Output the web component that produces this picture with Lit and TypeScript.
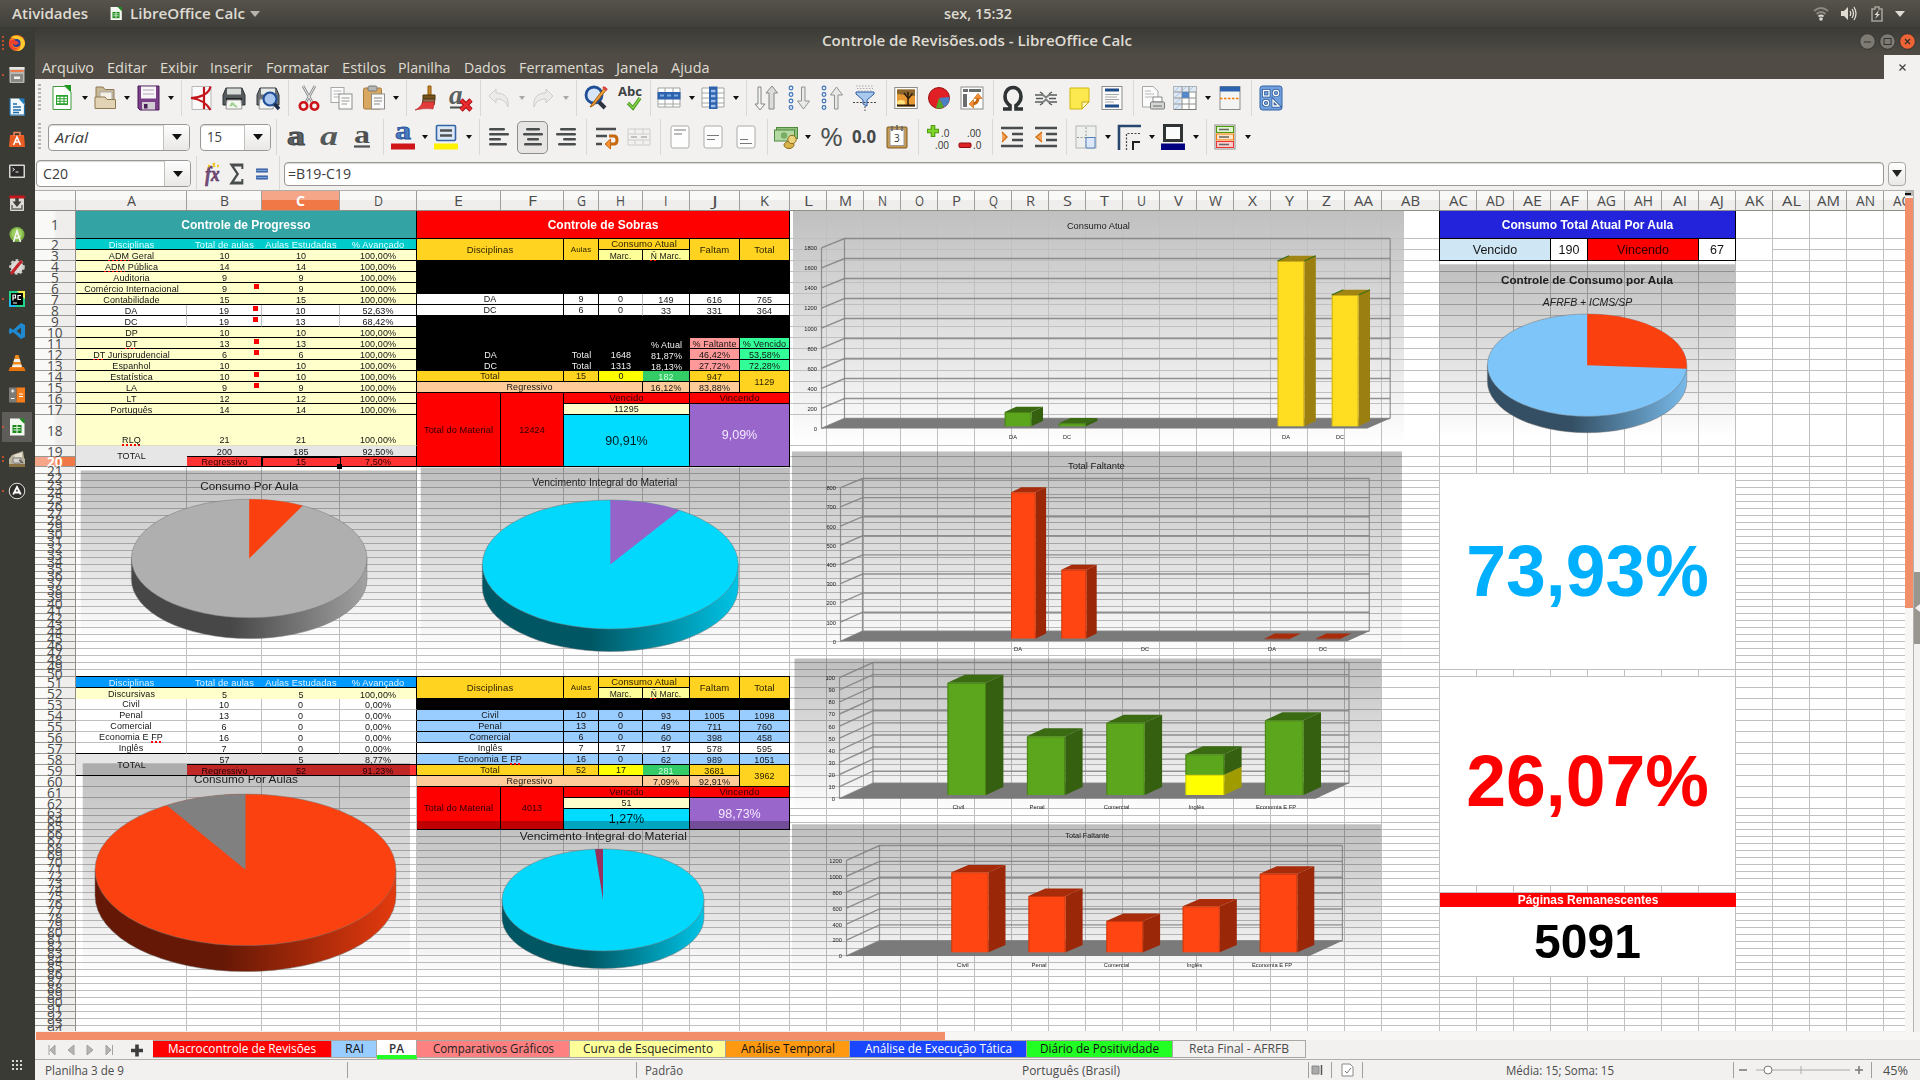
import { LitElement, html, svg, css, nothing } from "lit";
import { customElement } from "lit/decorators.js";

const UI = "'Open Sans','Noto Sans',sans-serif";
const range = (n: number) => Array.from({ length: n }, (_, i) => i);

/* ---------- sheet geometry ---------- */
const COLS = ["A","B","C","D","E","F","G","H","I","J","K","L","M","N","O","P","Q","R","S","T","U","V","W","X","Y","Z","AA","AB","AC","AD","AE","AF","AG","AH","AI","AJ","AK","AL","AM","AN","AO"];
const COL_W = COLS.map((c, i) => (i < 11 ? [111, 75, 78, 77, 84, 63, 35, 44, 47, 50, 50][i] : c === "AB" ? 58 : 37));
const rowH = (r: number) =>
  r === 1 ? 28 : r <= 17 ? 11 : r === 18 ? 31 : r === 19 ? 11 : r === 20 ? 10 : r <= 50 ? 7 : r <= 62 ? 11 : 7;
const ROW_H = range(94).map((i) => rowH(i + 1));
const GRID_W = 1829;
const GRID_H = 820;
const colTpl = COL_W.map((w) => w + "px").join(" ");
const rowTpl = ROW_H.map((h) => h + "px").join(" ");
const gridPath = (() => {
  let d = "", x = 0, y = 0;
  for (const w of COL_W) { x += w; d += `M${x - 0.5} 0V${GRID_H}`; }
  for (const h of ROW_H) { y += h; d += `M0 ${y - 0.5}H${GRID_W}`; }
  return d;
})();

/* Text drawn to an exact advance width */
const fit = (t: string, w: number, size = 14, color = "#4c4c4c", weight = 400, extra = "") => html`
  <svg class="fit" width=${w} height=${Math.round(size * 1.5)}>
    <text x="0" y=${size * 1.1} textLength=${w} lengthAdjust="spacingAndGlyphs" font-size=${size}
      font-weight=${weight} font-style=${extra || "normal"} fill=${color} font-family=${UI}>${t}</text></svg>`;

type Item = { x: number; w: number; c?: string; t?: unknown };
const row = (items: Item[], origin: number) => {
  let cur = origin;
  return items.map((i) => {
    const m = i.x - cur;
    cur = i.x + i.w;
    return html`<div class="it ${i.c ?? ""}" style="margin-left:${m}px;width:${i.w}px">${i.t ?? nothing}</div>`;
  });
};

/* ---------- icons ---------- */
const ic = (body: unknown, w = 24) => html`<svg class="fit" width=${w} height="26" viewBox="0 0 24 26" fill="none" preserveAspectRatio="none">${body}</svg>`;
const lines = (rows: number[][]) => rows.map(([x, y, w]) => svg`<rect x=${x} y=${y} width=${w} height="2.6" rx="1.3" fill="#4a4d4e"/>`);
const dropIcon = html`<svg width="6" height="4"><path d="M0 0H6L3 4Z" fill="#111"/></svg>`;
const dropDim = html`<svg width="6" height="4"><path d="M0 0H6L3 4Z" fill="#a9a8a6"/></svg>`;
const I: Record<string, unknown> = {
  new: ic(svg`<path d="M3 1.5H15L21 7V24.500H3Z" fill="#fff" stroke="#3c9a3c"/><path d="M14 0H21V7Z" fill="#1d9a1d"/><rect x="6" y="10" width="12" height="10" fill="#2aa02a"/><path d="M7 12.500H17M7 15H17M7 17.500H17" stroke="#fff" stroke-width="1.400"/><path d="M10 10V20M14 10V20" stroke="#2aa02a"/>`),
  open: ic(svg`<path d="M3 2H10L12 4.500H21V22H3Z" fill="#c9b896" stroke="#8d7a58"/><path d="M7 7H19V16H7Z" fill="#f4f0e6" stroke="#aaa"/><path d="M2 23.500V12H12L14 14.500H22.500V23.500Z" fill="#e2d3b4" stroke="#8d7952"/>`),
  save: ic(svg`<path d="M2 1H23V25H4L2 23Z" fill="#7a3f86" stroke="#4b1d58"/><rect x="5" y="1.500" width="15" height="12" fill="#f7f5f7"/><path d="M7 5H18M7 9H18" stroke="#c9c2cb" stroke-width="1.400"/><rect x="6" y="17" width="13" height="7.500" fill="#cfcbd0"/><rect x="8" y="19" width="3.500" height="4.500" fill="#4b1d58"/>`),
  pdf: ic(svg`<path d="M3 1.500H22V24.500H3Z" fill="#fafafa" stroke="#b8b8b8"/><path d="M21.500 1.500C20 9 11 13 2 13C10 14 17 17 21.500 25M15 2V24" stroke="#c3161c" stroke-width="2.200"/>`),
  print: ic(svg`<path d="M4 3H20L23 10V20H1V10Z" fill="#55595b" stroke="#2e3436"/><rect x="5" y="3.500" width="14" height="6" fill="#d9dbd8"/><path d="M4 13H20V16H4Z" fill="#222"/><path d="M5 15H19L20 24H4Z" fill="#f6f8f4" stroke="#999"/><path d="M9 18L15 22M8 21L12 18" stroke="#9fcf8b" stroke-width="2"/>`),
  preview: ic(svg`<path d="M4 3H20L23 10V20H1V10Z" fill="#6c7072" stroke="#2e3436"/><rect x="5" y="3.500" width="14" height="6" fill="#e8eae7"/><path d="M4 14H18L17 24H3Z" fill="#f1f4f0" stroke="#999"/><circle cx="14" cy="14" r="6.500" fill="#a9c6ee" stroke="#1f4f97" stroke-width="2.200"/><path d="M18.500 19L23 24" stroke="#1b2c48" stroke-width="3.400"/>`),
  cut: ic(svg`<path d="M6 1L15 17M18 1L9 17" stroke="#8b8f8e" stroke-width="2.600"/><path d="M6 1L15 17M18 1L9 17" stroke="#e4e6e4" stroke-width="1"/><circle cx="6.500" cy="21" r="3.700" stroke="#cc1216" stroke-width="2.600"/><circle cx="17.500" cy="21" r="3.700" stroke="#cc1216" stroke-width="2.600"/>`),
  copy: ic(svg`<rect x="2" y="2.500" width="13" height="15" fill="#fbfbfb" stroke="#a6a8a5"/><path d="M4.500 6H12.500M4.500 9H12.500M4.500 12H12.500" stroke="#b4b6b3"/><rect x="10" y="9" width="13" height="15" fill="#fbfbfb" stroke="#8c8f8b"/><path d="M12.500 13H20.500M12.500 16H20.500M12.500 19H18" stroke="#9a9d99"/>`),
  paste: ic(svg`<rect x="1.500" y="3" width="18" height="21" rx="1.500" fill="#d9a860" stroke="#a67a38"/><rect x="6" y="1" width="9" height="5" rx="1.500" fill="#b3b6b4" stroke="#777"/><rect x="9.500" y="9" width="13" height="15" fill="#fafafa" stroke="#8c8f8b"/><path d="M12 13H20M12 16H20M12 19H18" stroke="#888b87"/>`),
  brush: ic(svg`<path d="M14 1H17V11H14Z" fill="#c6862f" stroke="#8f5902"/><path d="M9 10H21V14H9Z" fill="#77511a" stroke="#4f3408"/><path d="M9 14H21L20 20H8Z" fill="#8f6a4a" stroke="#5a3c1e"/><path d="M9 17H20.500L19 24C12 23 6 24 1 25C5 23 7 21 9 17Z" fill="#e23b3b" stroke="#b31c20" stroke-width=".6"/>`),
  clear: ic(svg`<text x="1" y="19" font-size="27" font-style="italic" font-weight="700" fill="#5b6060" font-family="Liberation Serif">a</text><path d="M2 22.500H13" stroke="#4a4d4e" stroke-width="2"/><path d="M13 15L23 25M23 15L13 25" stroke="#a00c10" stroke-width="4.600"/><path d="M13 15L23 25M23 15L13 25" stroke="#ee2d30" stroke-width="2.800"/>`),
  undo: ic(svg`<path d="M2 11L9 4V8C18 8 22 13 21 22C19 16 15 14 9 14V18Z" fill="#ecebe9" stroke="#cfcdca"/>`),
  redo: ic(svg`<path d="M22 11L15 4V8C6 8 2 13 3 22C5 16 9 14 15 14V18Z" fill="#ecebe9" stroke="#cfcdca"/>`),
  find: ic(svg`<circle cx="10" cy="10" r="8" fill="#d7e4f6" stroke="#204f98" stroke-width="2.800"/><path d="M15 17L21 23" stroke="#2d3440" stroke-width="4"/><path d="M21 2L8 19L6 22L9.500 20.500L23 4Z" fill="#f2a33c" stroke="#a45a0c"/><path d="M19 2L23 5" stroke="#d44" stroke-width="2.600"/>`),
  abc: ic(svg`<text x="0" y="11" font-size="12" font-weight="700" textLength="24" lengthAdjust="spacingAndGlyphs" fill="#3c4142" font-family="Open Sans">Abc</text><path d="M10 18L15 23L22 13" stroke="#4a9a1e" stroke-width="3.400"/><path d="M10 18L15 23L22 13" stroke="#88d451" stroke-width="1.400"/>`),
  rows: ic(svg`<path d="M1 3H23V22H1Z" fill="#fff" stroke="#a2a5a1"/><path d="M8 3V22M16 3V22M1 19H23" stroke="#a2a5a1"/><rect x=".5" y="7" width="23" height="7.500" fill="#2d62ae"/><path d="M3 10.500H7M10 10.500H14M17 10.500H21" stroke="#7fa9e0" stroke-width="2"/>`),
  cols: ic(svg`<path d="M1 3H23V22H1Z" fill="#fff" stroke="#a2a5a1"/><path d="M1 8H23M1 13H23M1 18H23" stroke="#a2a5a1"/><rect x="8" y="1.500" width="8.500" height="22.500" fill="#2d62ae"/><path d="M10 6H14.500M10 11H14.500M10 16H14.500M10 21H14.500" stroke="#9fc0ec" stroke-width="2.400"/>`),
  sort: ic(svg`<path d="M7 2V19H11L6 25L1 19H4V2Z" fill="#f5f5f4" stroke="#848784"/><path d="M15 24V8H12L18 1L23.500 8H20V24Z" fill="#dcdddb" stroke="#848784"/>`),
  sortd: ic(svg`<g stroke="#3a6fb5" stroke-width="1.100" fill="#e6eefa"><circle cx="4" cy="3" r="1.900"/><circle cx="4" cy="9.500" r="1.900"/><circle cx="4" cy="16" r="1.900"/><circle cx="4" cy="22.500" r="1.900"/></g><path d="M14.500 2V16H10.500L16.500 24L22.500 16H18V2Z" fill="#e9eae8" stroke="#8f928f"/>`),
  sorta: ic(svg`<g stroke="#3a6fb5" stroke-width="1.100" fill="#e6eefa"><circle cx="4" cy="3" r="1.900"/><circle cx="4" cy="9.500" r="1.900"/><circle cx="4" cy="16" r="1.900"/><circle cx="4" cy="22.500" r="1.900"/></g><path d="M14.500 24V10H10.500L16.500 2L22.500 10H18V24Z" fill="#e9eae8" stroke="#8f928f"/>`),
  filter: ic(svg`<path d="M3 1H21M4 3.500H20M5 6H19" stroke="#aaa" stroke-dasharray="1.500 1.500"/><path d="M3 7H21V9L14 15V21L10 19V15L3 9Z" fill="#a9c8ee" stroke="#2c5da5"/><path d="M0 17.500H24M12 21V26" stroke="#444" stroke-dasharray="2 1.500"/>`),
  image: ic(svg`<rect x=".8" y="2.500" width="22.400" height="21" fill="#fff" stroke="#8b8e8a"/><rect x="3" y="4.500" width="18" height="17" fill="#e79a33"/><path d="M3 4.500H21V11L3 9Z" fill="#8a652e"/><ellipse cx="7" cy="18" rx="4" ry="3" fill="#ffe37a"/><path d="M14 20.500V13L10 8M14 14L18.500 8.500M14 12V7" stroke="#2c1c0a" stroke-width="1.500"/><path d="M3 20.500H21" stroke="#2c1c0a" stroke-width="2"/>`),
  chart: ic(svg`<circle cx="12" cy="13" r="10.500" fill="#e02024" stroke="#9c1115"/><path d="M12 13L22.400 12A10.500 10.500 0 0 1 17 22.300Z" fill="#4a7fc4"/><path d="M12 13L17 22.300A10.500 10.500 0 0 1 9 23Z" fill="#57a52b"/>`),
  pivot: ic(svg`<rect x="1" y="2" width="22" height="22" fill="#fff" stroke="#8b8e8a"/><path d="M3 4H8V7H3ZM9 4H21V7H9ZM3 9H7V22H3Z" fill="#6a6e6f"/><path d="M11 19C16 19 18 17 18 13" stroke="#c8680d" stroke-width="3"/><path d="M9 19L13.500 14.500V23ZM18 8.500L22 13.500H14Z" fill="#f5923b" stroke="#c8680d" stroke-width=".7"/>`),
  omega: ic(svg`<path d="M2 24H9V20.500C5.500 18 4 15 4 11.500C4 6 7.500 2.500 12 2.500C16.500 2.500 20 6 20 11.500C20 15 18.500 18 15 20.500V24H22" stroke="#2f3334" stroke-width="3.600"/>`),
  link: ic(svg`<path d="M1 10H9L12 12.500L15 10H23M1 17H9L12 14.500L15 17H23" stroke="#7d817f" stroke-width="2"/><path d="M2 13.500H9M15 13.500H22" stroke="#555957" stroke-width="1.600"/><path d="M6 7L9 9M18 7L15 9M6 20L9 18M18 20L15 18" stroke="#555957" stroke-width="1.400"/>`),
  note: ic(svg`<path d="M3 3H22V17L15 24H3Z" fill="#fbe94f" stroke="#d2b70e"/><path d="M15 24V17H22Z" fill="#fff9c0" stroke="#c8a60a"/>`),
  head: ic(svg`<rect x="2" y="1.500" width="20" height="23" fill="#fbfbfb" stroke="#8b8e8a"/><path d="M5 5H19M5 21H19" stroke="#1f4b87" stroke-width="3"/><path d="M5 9.500H19M5 12H17M5 14.500H19M5 17H14" stroke="#a7a9a6"/>`),
  area: ic(svg`<path d="M1.500 1.500H12L17 6V22H1.500Z" fill="#fbfbfb" stroke="#a6a8a5"/><path d="M4 6H10M4 9H13M4 12H13" stroke="#b7b9b6"/><path d="M12 12H21V17H12Z" fill="#fff" stroke="#888"/><rect x="9.500" y="17" width="14" height="7" rx="1" fill="#d5d7d4" stroke="#7b7e7a"/><path d="M12 21H21" stroke="#666"/>`),
  freeze: ic(svg`<rect x="1" y="1.500" width="22" height="23" fill="#fff" stroke="#777a76"/><path d="M1 1.500H23V7H9V24H1Z" fill="#dfe9f6"/><path d="M1 7H23M1 13H23M1 19H23M9 1.500V24.500M16 1.500V24.500" stroke="#8d908c"/><path d="M2 6L6 2M9 6L13 2M16 6L20 2M2 12L7 8M2 18L7 14M2 24L7 20" stroke="#9dbbe0" stroke-width=".8"/><rect x="9" y="7" width="7" height="6" fill="#5588c8"/>`),
  split: ic(svg`<rect x="2" y="1.500" width="20" height="23" fill="#f4f4f2" stroke="#8b8e8a"/><rect x="2" y="1.500" width="20" height="5" fill="#2d62ae"/><path d="M2 13.500H22" stroke="#f57900" stroke-width="1.500" stroke-dasharray="2.500 1.500"/>`),
  draw: ic(svg`<rect x="1" y="1" width="22" height="24" rx="2.500" fill="#6f9fdc" stroke="#3465a4"/><g stroke="#2a5797" stroke-width="2.800"><rect x="4.500" y="5.500" width="5.500" height="5.500"/><circle cx="17" cy="8" r="2.700"/><circle cx="7" cy="18" r="2.700"/><path d="M14 21V15L20 21Z"/></g><g stroke="#fff" stroke-width="1.300"><rect x="4.500" y="5.500" width="5.500" height="5.500"/><circle cx="17" cy="8" r="2.700"/><circle cx="7" cy="18" r="2.700"/><path d="M14 21V15L20 21Z"/></g>`),
  bold: ic(svg`<text x="3" y="21" font-size="27" font-weight="700" textLength="18" lengthAdjust="spacingAndGlyphs" fill="#5d6162" stroke="#43474a" stroke-width="1" font-family="Liberation Serif">a</text>`),
  ital: ic(svg`<text x="3" y="21" font-size="28" font-weight="700" font-style="italic" textLength="18" lengthAdjust="spacingAndGlyphs" fill="#55595a" font-family="Liberation Serif">a</text>`),
  under: ic(svg`<text x="4" y="19" font-size="25" font-weight="700" textLength="16" lengthAdjust="spacingAndGlyphs" fill="#4d5152" font-family="Liberation Serif">a</text><path d="M4 22.500H20" stroke="#4d5152" stroke-width="2.200"/>`),
  fcol: ic(svg`<text x="4" y="15" font-size="25" font-weight="700" textLength="16" lengthAdjust="spacingAndGlyphs" fill="#4b7cc0" stroke="#27539a" stroke-width=".8" font-family="Liberation Serif">a</text><rect x="0" y="19.500" width="24" height="6" fill="#cf1418"/>`),
  hl: ic(svg`<rect x="2.500" y="1.500" width="19" height="15" rx="1" fill="#dbe7f7" stroke="#3465a4" stroke-width="1.600"/><path d="M6 6.500H18M6 11.500H18" stroke="#4d5152" stroke-width="2.400"/><rect x="0" y="19.500" width="24" height="6" fill="#fff200"/>`),
  al: ic(lines([[2, 4, 16], [2, 9, 20], [2, 14, 12], [2, 19, 18]])),
  ac: ic(lines([[5, 4, 14], [2, 9, 20], [6, 14, 12], [3, 19, 18]])),
  ar: ic(lines([[6, 4, 16], [2, 9, 20], [9, 14, 13], [4, 19, 18]])),
  wrap: ic(svg`<path d="M1 5H21M1 12H12M1 20H7" stroke="#4a4d4e" stroke-width="2.400"/><path d="M14 12H19C23 12 23 20 19 20H14" stroke="#c8680d" stroke-width="3"/><path d="M10 20L15.500 15V25Z" fill="#f5923b" stroke="#c8680d"/>`),
  merge: ic(svg`<path d="M1 5H23V21H1ZM1 10H23M1 16H23M8 5V10M16 5V10M8 16V21M16 16V21" stroke="#cfcdca"/><path d="M4 13H10M14 13H20" stroke="#c2c0bd" stroke-width="2"/>`),
  vt: ic(svg`<rect x="3" y="2" width="18" height="22" rx="2" fill="#fdfdfd" stroke="#aaaca9"/><path d="M6 6H18M6 10H14" stroke="#777a77" stroke-width="1.200"/>`),
  vm: ic(svg`<rect x="3" y="2" width="18" height="22" rx="2" fill="#fdfdfd" stroke="#aaaca9"/><path d="M6 11.500H18M6 15.500H14" stroke="#777a77" stroke-width="1.200"/>`),
  vb: ic(svg`<rect x="3" y="2" width="18" height="22" rx="2" fill="#fdfdfd" stroke="#aaaca9"/><path d="M6 15.500H14M6 19.500H18" stroke="#777a77" stroke-width="1.200"/>`),
  money: ic(svg`<rect x="2.500" y="3.500" width="21" height="11" fill="#8fbf7b" stroke="#4e8a3c"/><rect x=".5" y="6" width="20" height="11" fill="#b5d9a3" stroke="#4e8a3c"/><circle cx="10" cy="11.500" r="3.200" fill="#79ad66"/><ellipse cx="15" cy="21" rx="5" ry="3.500" fill="#d9b34c" stroke="#8a6914"/><circle cx="18" cy="15.500" r="4.200" fill="#ecd27c" stroke="#8a6914"/>`),
  pct: ic(svg`<text x="0" y="22" font-size="26" textLength="23" lengthAdjust="spacingAndGlyphs" fill="#4d5152" font-family="Open Sans">%</text>`),
  num: ic(svg`<text x="0" y="19" font-size="17" font-weight="700" textLength="24" lengthAdjust="spacingAndGlyphs" fill="#454849" font-family="Open Sans">0.0</text>`),
  date: ic(svg`<rect x="2" y="3" width="20" height="21" rx="1" fill="#c99a52" stroke="#7b5a22"/><rect x="5" y="5.500" width="14" height="16" fill="#fff" stroke="#999"/><path d="M7 2V7M12 1V6M17 2V7" stroke="#666" stroke-width="1.600"/><text x="9" y="18" font-size="10" fill="#333" font-family="Open Sans">3</text>`),
  adddec: ic(svg`<path d="M1 7H13M7 1V13" stroke="#4f9a10" stroke-width="4.600"/><path d="M2 7H12M7 2V12" stroke="#7fd628" stroke-width="2.400"/><text x="15" y="13" font-size="10" fill="#333" font-family="Open Sans">.0</text><text x="9" y="25" font-size="10" fill="#333" font-family="Open Sans">.00</text>`),
  remdec: ic(svg`<text x="9" y="13" font-size="10" fill="#333" font-family="Open Sans">.00</text><text x="15" y="25" font-size="10" fill="#333" font-family="Open Sans">.0</text><rect x="1" y="19" width="12" height="4.500" rx="1" fill="#dd2226" stroke="#930c10"/>`),
  ind: ic(svg`<path d="M1 4H23M12 10H23M12 16H23M1 22H23" stroke="#4a4d4e" stroke-width="2.600"/><path d="M2 8L7 13L2 18" fill="#f5a15b" stroke="#d0700f" stroke-width="1.400"/>`),
  outd: ic(svg`<path d="M1 4H23M12 10H23M12 16H23M1 22H23" stroke="#4a4d4e" stroke-width="2.600"/><path d="M8 8L2 13L8 18" fill="#f5a15b" stroke="#d0700f" stroke-width="1.400"/>`),
  bord: ic(svg`<rect x="2" y="2" width="20" height="22" fill="#eef0ed" stroke="#b4b6b3"/><path d="M12 3V24M3 13.500H22" stroke="#999" stroke-dasharray="2 1.500"/><path d="M12 13.500H21V24H12Z" fill="#dce8f8" stroke="#5580bb"/>`),
  bsty: ic(svg`<path d="M2 26V2H24" stroke="#27476e" stroke-width="2.600"/><path d="M9.500 26V9.500H24" stroke="#444" stroke-width="1.200" stroke-dasharray="2 1.500"/><path d="M16 26V18H23" stroke="#222" stroke-width="2"/>`),
  bcol: ic(svg`<rect x="3.500" y="1.500" width="17" height="15" fill="#fbfbfb" stroke="#2f3334" stroke-width="3"/><rect x="0" y="19.500" width="24" height="6.500" fill="#000080"/>`),
  cond: ic(svg`<rect x="2" y="1" width="20" height="24" fill="#fbfbfb" stroke="#8b8e8a"/><rect x="3.500" y="2.500" width="17" height="6" fill="#dff5d2" stroke="#4e9a06"/><rect x="3.500" y="10" width="17" height="6" fill="#fce5c8" stroke="#f57900"/><rect x="3.500" y="17.500" width="17" height="6" fill="#fbcaca" stroke="#e33"/><path d="M6 5.500H16M6 13H16M6 20.500H16" stroke="#666" stroke-width="1.500"/>`),
  fx: ic(svg`<text x="3" y="20" font-size="20" font-style="italic" font-weight="700" textLength="19" lengthAdjust="spacingAndGlyphs" fill="#75507b" stroke="#5c3566" stroke-width=".7" font-family="Liberation Serif">fx</text><path d="M7 4L9 6M9 4L7 6M13 2L16 6M16 2L13 6M19 4L21 6M21 4L19 6" stroke="#f0c419" stroke-width="1.600"/>`, 18),
  sum: ic(svg`<path d="M20 8V4H4L13 13L4 22H20V18" stroke="#4a4d4e" stroke-width="3"/>`, 16),
  eq: ic(svg`<path d="M2 9.500H22M2 16.500H22" stroke="#27539a" stroke-width="4"/><path d="M3 9.500H21M3 16.500H21" stroke="#7ba3da" stroke-width="1.400"/>`, 14),
};

const it = (k: string, cx: number, w = 22): Item => ({ x: cx - w / 2, w, t: I[k] });
const dd = (cx: number, dim = false): Item => ({ x: cx - 3, w: 6, t: dim ? dropDim : dropIcon });
const sp = (cx: number): Item => ({ x: cx, w: 1, c: "sep" });
const bar1: Item[] = [
  { x: 38, w: 3, c: "grip" }, it("new", 62), dd(84.5), it("open", 105), dd(126.5), it("save", 148), dd(170.5), sp(181), it("pdf", 201, 21), it("print", 234), it("preview", 267.5), sp(288),
  it("cut", 308.5, 20), it("copy", 341), it("paste", 373.5), dd(395.5), sp(406), it("brush", 426), it("clear", 460), sp(480), it("undo", 499, 23), dd(521.5, true), it("redo", 543, 23), dd(565.5, true), sp(576),
  it("find", 595.5, 23), it("abc", 629.5, 23), sp(650), it("rows", 669), dd(691.5), it("cols", 713), dd(735.5), sp(746), it("sort", 766), it("sortd", 799), it("sorta", 832), it("filter", 864.5), sp(886),
  it("image", 906, 24), it("chart", 939), it("pivot", 972), sp(993), it("omega", 1013), it("link", 1046), it("note", 1079), it("head", 1112), sp(1133), it("area", 1153, 24), it("freeze", 1185), dd(1207.5), it("split", 1230), sp(1251), it("draw", 1271, 23),
];
const combo = (x: number, w: number, split: number, t: unknown): Item => ({ x, w, c: "combo", t: html`<div class="cv" style="width:${split}px">${t}</div><div class="cb"><svg width="10" height="6"><path d="M0 0H10L5 6Z" fill="#111"/></svg></div>` });
const bar2: Item[] = [
  { x: 38, w: 3, c: "grip" }, combo(48, 142, 115, fit("Arial", 33, 15, "#3c3c3c", 400, "italic")), combo(200, 71, 44, fit("15", 15, 14.5, "#3c3c3c")), sp(276),
  it("bold", 296), it("ital", 329), it("under", 362), sp(383), it("fcol", 402.500, 24), dd(424.500), it("hl", 446, 24), dd(468.500), sp(479), it("al", 499), { ...it("ac", 532.500, 31), c: "pressed" }, it("ar", 565.500), sp(586),
  it("wrap", 606.500), it("merge", 639), sp(660), it("vt", 680), it("vm", 713), it("vb", 746), sp(767), it("money", 785.500, 23), dd(808), it("pct", 831.500), it("num", 863.500, 24), it("date", 897), sp(918),
  it("adddec", 938, 25), it("remdec", 970, 25), sp(992), it("ind", 1012, 24), it("outd", 1046, 24), sp(1066), it("bord", 1085.500), dd(1107.500), it("bsty", 1129), dd(1151.500), it("bcol", 1173, 24), dd(1195.500), sp(1206), it("cond", 1225), dd(1247.500),
];
const bar3: Item[] = [
  combo(36, 155, 128, fit("C20", 25, 14.5, "#3c3c3c")), sp(196), it("fx", 212, 18), it("sum", 237, 16), it("eq", 262, 14), sp(279),
  { x: 284, w: 1600, c: "input", t: fit("=B19-C19", 63, 14.5, "#3c3c3c") },
  { x: 1888, w: 18, c: "drop", t: html`<svg width="10" height="7"><path d="M0 0H10L5 7Z" fill="#222"/></svg>` },
];

/* ---------- dock ---------- */
const dk = (b: unknown) => html`<svg width="18" height="18" viewBox="0 0 18 18" fill="none">${b}</svg>`;
const dock: [unknown, number, boolean?][] = [
  [dk(svg`<circle cx="9" cy="9" r="8" fill="#ff7a18"/><path d="M3 3C7 0 16 2 17 9C17 13 14 17 9 17C15 13 13 6 8 5Z" fill="#ffcb2e"/><circle cx="8.500" cy="9" r="4" fill="#2a3f9e"/><path d="M1 8C3 4 8 6 11 9C9 11 6 12 4 9C3 12 6 15 10 14C5 18 0 14 1 8Z" fill="#f0412e"/>`), 4],
  [dk(svg`<rect x="1.500" y="1" width="15" height="16" rx="1" fill="#b9b7b3"/><rect x="1.500" y="1" width="15" height="2.500" fill="#e8e6e3"/><rect x="2.500" y="4" width="13" height="2" fill="#f07746"/><rect x="3" y="8" width="12" height="8" fill="#8b8985"/><rect x="6" y="10.500" width="6" height="2.500" fill="#f3f2f0"/>`), 1],
  [dk(svg`<path d="M2 .5H12L16.500 5V17.500H2Z" fill="#f4f9fd"/><path d="M2 17H16.500V7M2 .5V17" stroke="#1f6ea8" stroke-width="1.200"/><path d="M10.500 .5H16.500V7Z" fill="#1f7fc4"/><path d="M5 6H9M5 9H13M5 12H13M5 14.500H11" stroke="#1f6ea8" stroke-width="1.300"/>`), 0],
  [dk(svg`<path d="M2 5H16L17 17H1Z" fill="#e95d22"/><path d="M6 6V2.500H12V6" stroke="#f08658" stroke-width="1.500"/><path d="M5.500 15L9 7L12.500 15M7 12H11" stroke="#fff" stroke-width="1.600"/>`), 0],
  [dk(svg`<rect x="1" y="2.500" width="16" height="13.500" rx="1" fill="#d8d6d2"/><rect x="2.500" y="4" width="13" height="10.500" fill="#2b2a28"/><path d="M4.500 6L6.500 7.500L4.500 9M7.500 10H10.500" stroke="#eee"/>`), 0],
  [dk(svg`<rect x="2" y="4" width="14" height="13" rx="1" fill="#dcdad6"/><rect x="1" y="1.500" width="16" height="3" rx="1.500" fill="#c3171b"/><path d="M9 4V9" stroke="#403f3c" stroke-width="3.500"/><path d="M4.500 7.500H13.500L9 13Z" fill="#403f3c"/><path d="M4 11V15H14V11" stroke="#6a6864" stroke-width="1.500"/>`), 0],
  [dk(svg`<circle cx="9" cy="8.500" r="7.500" fill="#7cb342"/><circle cx="9" cy="8" r="5.500" fill="#9fce63"/><path d="M5.500 16L9 5L12.500 16M6.500 11C8 12.500 10 12.500 12 10" stroke="#f4f4f4" stroke-width="1.600"/>`), 0],
  [dk(svg`<circle cx="9" cy="9" r="6.300" fill="#dddbd8" stroke="#cfcdca" stroke-width="3" stroke-dasharray="2.600 2"/><path d="M3 16L11 6M11 6L14 3" stroke="#c4232a" stroke-width="3"/>`), 0],
  [dk(svg`<rect x="1" y="1" width="16" height="16" fill="#22d58a"/><path d="M9 1H17V9Z" fill="#f6f14c"/><path d="M1 9V17H9Z" fill="#1fb8f2"/><rect x="3" y="3" width="12" height="12" fill="#050505"/><path d="M5 10.500V5H7.500V8H5M13 5.500H10V9.500H13M5 13H9" stroke="#fff" stroke-width="1.200"/>`), 1],
  [dk(svg`<path d="M13 1L17 3V15L13 17L5 10L2.500 12L1 11V7L2.500 6L5 8Z" fill="#1f8ad2"/><path d="M13 5.500V12.500L8.500 9Z" fill="#3c3b37"/>`), 0],
  [dk(svg`<path d="M2 13H16L17.500 17H.5Z" fill="#e8720c"/><path d="M7.500 1H10.500L14.500 14H3.500Z" fill="#f28a1c"/><path d="M6.400 5H11.600L12.500 8H5.500ZM4.800 10.500H13.200L14 13H4Z" fill="#f2f0ee"/>`), 0],
  [dk(svg`<rect x="1" y="1.500" width="7.500" height="15" fill="#7d7b77"/><rect x="8.500" y="1.500" width="8.500" height="15" fill="#f57e1a"/><path d="M3 5H6.500M4.750 3.300V6.700M3 12.500H6.500M11 8H15M11 10.500H15" stroke="#fff"/>`), 0],
  [dk(svg`<path d="M2 .5H12L16.500 5V17.500H2Z" fill="#f3f8f1"/><path d="M11 .5H16.500V6Z" fill="#1d8f1d"/><rect x="4.500" y="7" width="9" height="8" fill="#198a19"/><path d="M5.500 9.500H12.500M5.500 12H12.500M9 7V15" stroke="#e5f6e5"/>`), 1, true],
  [dk(svg`<path d="M4 5L15 1L16 8L17 9V15H1V9Z" fill="#b9b29c"/><path d="M6 5L14 2.500V7L7 8Z" fill="#e4dfd0"/><path d="M1 14H17V17H1Z" fill="#8a7343"/><rect x="5" y="8" width="8" height="5" rx="1" fill="#d8d5cc" stroke="#777"/><path d="M11 10L15 13" stroke="#555" stroke-width="1.500"/>`), 2],
  [dk(svg`<circle cx="9" cy="9" r="7.800" fill="#2e2d2a" stroke="#e4e2de" stroke-width="1"/><path d="M5.200 12.500L9 5L12.800 12.500M6.500 10.500H11.500" stroke="#fff" stroke-width="1.800"/>`), 1],
];

/* ---------- cell content ---------- */
const colIx = (c: string) => COLS.indexOf(c) + 1;
/* range "A3:D3", text, class list */
const cell = (ref: string, text: unknown = "", cls = "") => {
  const [a, b = a] = ref.split(":");
  const m1 = /([A-Z]+)(\d+)/.exec(a)!, m2 = /([A-Z]+)(\d+)/.exec(b)!;
  const st = `grid-area:${m1[2]}/${colIx(m1[1])}/${+m2[2] + 1}/${colIx(m2[1]) + 1}`;
  return html`<div class="cell ${cls}" style=${st}><span>${text}</span></div>`;
};
const sq = (t: string) => html`<i class="sq">${t}</i>`;
const dot = html`<b class="dot"></b>`;

const progress: [number, unknown, string, string, string, boolean?][] = [
  [3, html`${sq("ADM")} Geral`, "10", "10", "100,00%"], [4, html`${sq("ADM")} Pública`, "14", "14", "100,00%"], [5, "Auditoria", "9", "9", "100,00%"],
  [6, "Comércio Internacional", "9", "9", "100,00%", true], [7, "Contabilidade", "15", "15", "100,00%"], [8, "DA", "19", "10", "52,63%", true],
  [9, "DC", "19", "13", "68,42%", true], [10, "DP", "10", "10", "100,00%"], [11, sq("DT"), "13", "13", "100,00%", true],
  [12, html`${sq("DT")} Jurisprudencial`, "6", "6", "100,00%", true], [13, "Espanhol", "10", "10", "100,00%"], [14, "Estatística", "10", "10", "100,00%", true],
  [15, "LA", "9", "9", "100,00%", true], [16, "LT", "12", "12", "100,00%"], [17, "Português", "14", "14", "100,00%"], [18, sq("RLQ"), "21", "21", "100,00%"],
];
const cellsLeft = () => [
  cell("A1:D1", "Controle de Progresso", "teal h1 bb br"),
  ...["Disciplinas", "Total de aulas", "Aulas Estudadas", "% Avançado"].map((t, i) => cell("ABCD"[i] + 2, t, "cyanh dn wide bb" + (i === 3 ? " br" : ""))),
  ...progress.flatMap(([r, n, b, c, d, mk]) => {
    const white = r === 8 || r === 9;
    const base = (white ? "white gr" : "cream") + " dn bb" + (r === 18 ? " bot nb" : "");
    return [cell("A" + r, n, base.replace(" gr", " gr")), cell("B" + r, mk ? html`${b}${dot}` : b, base), cell("C" + r, c, base), cell("D" + r, d, base + " br")];
  }),
  cell("A19:A20", "TOTAL", "grey bb"), cell("B19", "200", "grey dn bb"), cell("C19", "185", "grey dn bb"), cell("D19", "92,50%", "grey dn bb br"),
  cell("B20", "Regressivo", "redl bb"), cell("C20", "15", "redl bb"), cell("D20", "7,50%", "redl bb br"),
  ...["Disciplinas", "Total de aulas", "Aulas Estudadas", "% Avançado"].map((t, i) => cell("ABCD"[i] + 51, t, "blueh dn wide bb bt" + (i === 3 ? " br" : ""))),
  ...([[52, "Discursivas", "5", "5", "100,00%"], [53, "Civil", "10", "0", "0,00%"], [54, "Penal", "13", "0", "0,00%"], [55, "Comercial", "6", "0", "0,00%"],
    [56, html`Economia E ${sq("FP")}`, "16", "0", "0,00%"], [57, "Inglês", "7", "0", "0,00%"]] as [number, unknown, string, string, string][]).flatMap(([r, ...v]) =>
    v.map((t, i) => cell("ABCD"[i] + r, t, (r === 52 ? "cream" : "white gr") + (r === 57 ? " bb" : r === 52 ? "" : " gb") + (i === 3 ? " br" : "") + (i ? " dn" : "")))),
  cell("A58:A59", "TOTAL", "grey bb"), cell("B58", "57", "grey bb dn"), cell("C58", "5", "grey bb dn"), cell("D58", "8,77%", "grey bb dn br"),
  cell("B59", "Regressivo", "redl bb dn"), cell("C59", "52", "redl bb dn"), cell("D59", "91,23%", "redl bb br dn"),
];
const sobrasHead = (r: number) => [
  cell(`E${r}:F${r + 1}`, "Disciplinas", "gold bb br bt f95"), cell(`G${r}:G${r + 1}`, "Aulas", "gold bb br bt f8"), cell(`H${r}:I${r}`, "Consumo Atual", "gold bb br bt f95"),
  cell(`H${r + 1}`, "Marc.", "lemon bb br f85 dn"), cell(`I${r + 1}`, html`${sq("Ñ")} Marc.`, "lemon bb br dn f85"), cell(`J${r}:J${r + 1}`, "Faltam", "gold bb br bt f95"), cell(`K${r}:K${r + 1}`, "Total", "gold bb br bt f95"),
];
const sobrasRow = (r: number, cls: string, v: unknown[]) => [
  cell(`E${r}:F${r}`, v[0], cls + " bb br"), cell(`G${r}`, v[1], cls + " bb br"), cell(`H${r}`, v[2], cls + (cls === "white" ? " bb gr" : " bb br")),
  cell(`I${r}`, v[3], cls + " bb br dn"), cell(`J${r}`, v[4], cls + " bb br dn"), cell(`K${r}`, v[5], cls + " bb br dn"),
];
const sobrasFoot = (r: number, v: string[]) => [
  cell(`E${r}:F${r}`, "Total", "gold bb br"), cell(`G${r}`, v[0], "gold bb br"), cell(`H${r}`, v[1], "yellow bb"), cell(`I${r}`, v[2], "green bb br dn"), cell(`J${r}`, v[3], "gold bb br dn"),
  cell(`K${r}:K${r + 1}`, v[4], "gold bb br"), cell(`E${r + 1}:H${r + 1}`, "Regressivo", "peach bb br"), cell(`I${r + 1}`, v[5], "peach bb br dn"), cell(`J${r + 1}`, v[6], "peach bb br dn"),
];
const material = (r: number, end: number, v: string[]) => [
  cell(`E${r}:E${end}`, "Total do Material", "red bb br f93"), cell(`F${r}:F${end}`, v[0], "red bb br"), cell(`G${r}:I${r}`, "Vencido", "red bb br f95"), cell(`J${r}:K${r}`, "Vincendo", "red bb br f95"),
  cell(`G${r + 1}:I${r + 1}`, v[1], "cream bb br"), cell(`G${r + 2}:I${end}`, v[2], "aqua bb br f13"), cell(`J${r + 1}:K${end}`, v[3], "purple bb br f13"),
];
const cellsMid = () => [
  cell("E1:K1", "Controle de Sobras", "red h1 wt bb br"), ...sobrasHead(2),
  cell("E4:K6", "", "black"), ...sobrasRow(7, "white", ["DA", "9", "0", "149", "616", "765"]), ...sobrasRow(8, "white", ["DC", "6", "0", "33", "331", "364"]),
  cell("E9:K10", "", "black"), cell("E11:H11", "", "black"), cell("I11", "% Atual", "black dn"), cell("J11", "% Faltante", "pink bb br dn"), cell("K11", "% Vencido", "mint bb br dn"),
  ...([[12, "DA", "1648", "81,87%", "46,42%", "53,58%"], [13, "DC", "1313", "18,13%", "27,72%", "72,28%"]] as [number, ...string[]][]).flatMap(([r, n, h, i, j, k]) => [
    cell(`E${r}:F${r}`, n, "black"), cell(`G${r}`, "Total", "black"), cell(`H${r}`, h, "black"), cell(`I${r}`, i, "black dn"), cell(`J${r}`, j, "pink bb br dn"), cell(`K${r}`, k, "mint bb br dn")]),
  ...sobrasFoot(14, ["15", "0", "182", "947", "1129", "16,12%", "83,88%"]), ...material(16, 20, ["12424", "11295", "90,91%", "9,09%"]),
  ...sobrasHead(51), cell("E53:K53", "", "black"),
  ...sobrasRow(54, "sky", ["Civil", "10", "0", "93", "1005", "1098"]), ...sobrasRow(55, "sky", ["Penal", "13", "0", "49", "711", "760"]),
  ...sobrasRow(56, "sky", ["Comercial", "6", "0", "60", "398", "458"]), ...sobrasRow(57, "white", ["Inglês", "7", "17", "17", "578", "595"]),
  ...sobrasRow(58, "sky", [html`Economia E ${sq("FP")}`, "16", "0", "62", "989", "1051"]),
  ...sobrasFoot(59, ["52", "17", "281", "3681", "3962", "7,09%", "92,91%"]), ...material(61, 65, ["4013", "51", "1,27%", "98,73%"]),
];
const cellsRight = () => [
  cell("AC1:AJ1", "Consumo Total Atual Por Aula", "navy h1 bb br bl"), cell("AC2:AE3", "Vencido", "pale bb br bl f13"), cell("AF2:AF3", "190", "white bb br f13"),
  cell("AG2:AI3", "Vincendo", "red bb br f13"), cell("AJ2:AJ3", "67", "white bb br f13"), cell("AK2:AK3", "", "white gr gb"),
  cell("AC22:AJ49", "73,93%", "white gr gb huge c1"), cell("AC51:AJ73", "26,07%", "white gr gb huge c2"),
  cell("AC75:AJ76", "Páginas Remanescentes", "red wt h2"), cell("AC77:AJ86", "5091", "white gr gb big"),
];

/* ---------- charts (drawn in page coordinates shifted to the sheet) ---------- */
const txt = (x: number, y: number, s: string, w: number, size: number, o: { b?: boolean; i?: boolean } = {}) => svg`
  <text x=${x - w / 2} y=${y} textLength=${w} lengthAdjust="spacingAndGlyphs" font-size=${size} font-weight=${o.b ? 700 : 400} font-style=${o.i ? "italic" : "normal"} fill="#1c1c1c">${s}</text>`;
type Bar = { x: number; x2: number; top: number; c: string[]; from?: number };
interface BarCfg { bx: number; by: number; bx2: number; by2: number; fx: number; fy: number; fy2: number; n: number; max: number; base: number; dx: number; dy: number; bars: Bar[]; labels: [number, string, number][]; ly: number }
const ORANGE = ["#ff4612", "#9a2708", "#a82c09"], GREEN = ["#5ba61c", "#35600f", "#3a6b12"], YEL = ["#ffdd20", "#9b8011", "#a08513"], LEMON = ["#ffff00", "#a09c00", "#a09c00"];
const barChart = (k: BarCfg) => svg`
  <g stroke="#808080" stroke-opacity=".85" fill="none">
    ${range(k.n + 1).map((i) => {
      const yb = k.by + ((k.by2 - k.by) * i) / k.n, yf = k.fy + ((k.fy2 - k.fy) * i) / k.n;
      return svg`<path d="M${k.fx} ${yf}L${k.bx} ${yb}H${k.bx2}" stroke-width="1.400"/>`;
    })}
    <path d="M${k.fx} ${k.fy}V${k.fy2}M${k.bx} ${k.by}V${k.by2}M${k.bx2} ${k.by}V${k.by2}" stroke-width="1.200"/>
  </g>
  <path d="M${k.fx} ${k.fy2}L${k.bx} ${k.by2}H${k.bx2}L${k.bx2 - (k.bx - k.fx)} ${k.fy2}Z" fill="#7a7a7a"/>
  ${k.bars.map((b) => {
    const bot = b.from ?? k.base;
    return svg`<path d="M${b.x} ${b.top}l${k.dx} ${k.dy}H${b.x2 + k.dx}L${b.x2} ${b.top}Z" fill=${b.c[2]}/>
      <path d="M${b.x2} ${b.top}l${k.dx} ${k.dy}V${bot + k.dy}L${b.x2} ${bot}Z" fill=${b.c[1]}/>
      <rect x=${b.x} y=${b.top} width=${b.x2 - b.x} height=${Math.max(0, bot - b.top)} fill=${b.c[0]}/>
      <path d="M${b.x + 0.5} ${bot}V${b.top + 0.5}H${b.x2 - 0.5}V${bot}" fill="none" stroke=${b.c[1]} stroke-opacity=".5"/>`;
  })}
  ${range(k.n + 1).map((i) => {
    const v = String(k.max - (k.max * i) / k.n), w = v.length * 3.2;
    return txt(k.fx - 4.5 - w / 2, k.fy + ((k.fy2 - k.fy) * i) / k.n + 2.400, v, w, 6);
  })}
  ${k.labels.map(([x, s, w]) => txt(x, k.ly + 2.200, s, w, 6))}`;
const pt = (cx: number, cy: number, rx: number, ry: number, f: number) => {
  const a = f * Math.PI * 2;
  return `${cx + rx * Math.sin(a)} ${cy - ry * Math.cos(a)}`;
};
const pie = (id: string, cx: number, cy: number, rx: number, ry: number, h: number, main: string, dark: string, lit: string, slice: string, f0: number, f1: number) => svg`
  <defs><linearGradient id=${id}><stop offset="0" stop-color=${dark}/><stop offset=".42" stop-color=${dark}/><stop offset="1" stop-color=${lit}/></linearGradient></defs>
  <path d="M${cx - rx} ${cy}V${cy + h}A${rx} ${ry} 0 0 0 ${cx + rx} ${cy + h}V${cy}Z" fill="url(#${id})" stroke="#777" stroke-width=".5"/>
  <ellipse cx=${cx} cy=${cy} rx=${rx} ry=${ry} fill=${main} stroke="#777" stroke-width=".5"/>
  <path d="M${cx} ${cy}L${pt(cx, cy, rx, ry, f0)}A${rx} ${ry} 0 0 1 ${pt(cx, cy, rx, ry, f1)}Z" fill=${slice}/>`;
const plate = (x: number, y: number, x2: number, y2: number) => svg`<rect x=${x} y=${y} width=${x2 - x} height=${y2 - y} fill="url(#shade)"/>`;
const names = (xs: number[]): [number, string, number][] => [[xs[0], "Civil", 12], [xs[1], "Penal", 15], [xs[2], "Comercial", 25.500], [xs[3], "Inglês", 15.500], [xs[4], "Economia E FP", 40]];

const charts = () => html`
  <div class="plate1"></div>
  <svg class="charts" width="1829" height="820" viewBox="76 211 1829 820" font-family="Liberation Sans">
    <defs><linearGradient id="shade" x1="0" y1="0" x2="0" y2="1"><stop offset="0" stop-color="#000" stop-opacity=".255"/><stop offset="1" stop-color="#000" stop-opacity="0"/></linearGradient></defs>
    ${txt(1098.400, 229, "Consumo Atual", 63, 9.500)}
    ${barChart({ bx: 844.5, by: 238.5, bx2: 1390.2, by2: 418.5, fx: 821.5, fy: 247.8, fy2: 428.500, n: 9, max: 1800, base: 426.300, dx: 11.500, dy: -5.300, ly: 437,
      bars: [{ x: 1004.700, x2: 1031.500, top: 412, c: GREEN }, { x: 1058.900, x2: 1085.800, top: 423.300, c: GREEN }, { x: 1277.500, x2: 1304.300, top: 261, c: YEL }, { x: 1331.700, x2: 1358.500, top: 295, c: YEL }],
      labels: [[1013, "DA", 8], [1067, "DC", 8], [1286, "DA", 8], [1340, "DC", 8]] })}
    <path d="M1277.500 261l11.500 -5.300M1304.300 261l11.500 -5.300M1331.700 295l11.500 -5.300M1358.500 295l11.500 -5.300" stroke="#3a6b12" stroke-width="1.200"/>
    ${plate(792, 451.500, 1402, 657)}
    ${txt(1096.400, 469, "Total Faltante", 57, 9.500)}
    ${barChart({ bx: 862.5, by: 478.5, bx2: 1369.3, by2: 631.300, fx: 840.5, fy: 487.7, fy2: 641.300, n: 8, max: 800, base: 638.500, dx: 10.400, dy: -5, ly: 649,
      bars: [{ x: 1011, x2: 1035.700, top: 492.300, c: ORANGE }, { x: 1061.300, x2: 1086.300, top: 569.700, c: ORANGE }, { x: 1264.500, x2: 1290.600, top: 638.500, c: ORANGE }, { x: 1315.900, x2: 1341, top: 638.500, c: ORANGE }],
      labels: [[1018, "DA", 8], [1145, "DC", 8], [1272, "DA", 8], [1323, "DC", 8]] })}
    ${plate(794.500, 658.500, 1381, 814)}
    ${barChart({ bx: 873, by: 662.5, bx2: 1349, by2: 783.300, fx: 839.5, fy: 677.7, fy2: 798.700, n: 10, max: 100, base: 795, dx: 17.400, dy: -8, ly: 807,
      bars: [{ x: 947.400, x2: 986, top: 682.700, c: GREEN }, { x: 1026.900, x2: 1065.200, top: 736.300, c: GREEN }, { x: 1106.300, x2: 1144.700, top: 722.700, c: GREEN },
        { x: 1185.400, x2: 1224.200, top: 774.700, c: LEMON }, { x: 1185.400, x2: 1224.200, top: 754.300, from: 774.700, c: GREEN }, { x: 1264.900, x2: 1303.600, top: 720.300, c: GREEN }],
      labels: names([958.4, 1037, 1116.6, 1196.5, 1276]) })}
    ${plate(792, 824.300, 1381, 980)}
    ${txt(1087.300, 837.600, "Total Faltante", 44, 7.500)}
    ${barChart({ bx: 879.5, by: 845.5, bx2: 1342.4, by2: 940.700, fx: 846.5, fy: 860.3, fy2: 956, n: 6, max: 1200, base: 952.300, dx: 17, dy: -7.400, ly: 965,
      bars: [{ x: 951.300, x2: 988.500, top: 872.300, c: ORANGE }, { x: 1028.400, x2: 1065.600, top: 896, c: ORANGE }, { x: 1106.300, x2: 1143.100, top: 921, c: ORANGE }, { x: 1182.600, x2: 1219.800, top: 906.300, c: ORANGE }, { x: 1259.700, x2: 1297.300, top: 873.700, c: ORANGE }],
      labels: names([962.8, 1039, 1116.6, 1194.5, 1272]) })}
    ${plate(80.700, 470.500, 417, 641)}${txt(249.300, 490, "Consumo Por Aula", 98, 11)}
    ${pie("p1", 249.2, 558.5, 117.8, 59.3, 20.800, "#afafaf", "#474747", "#a2a2a2", "#fb4010", 0, 0.075)}
    ${plate(420.700, 467.500, 789, 656)}${txt(604.700, 486, "Vencimento Integral do Material", 145, 10.800)}
    ${pie("p2", 610.3, 564.5, 128, 64.5, 22.500, "#02d8fb", "#005663", "#00c4e6", "#9664c8", 0, 0.0909)}
    ${plate(82.700, 763.300, 410, 977)}${txt(246, 783, "Consumo Por Aulas", 104, 11)}
    ${pie("p3", 245.5, 869.8, 150.5, 75.800, 26, "#fc4110", "#651805", "#e43a0e", "#808080", -0.0877, 0)}
    ${plate(417, 821, 789, 978)}${txt(603.300, 839.800, "Vencimento Integral do Material", 167, 11)}
    ${pie("p4", 603, 900, 101, 51, 17.500, "#02d8fb", "#005663", "#00c4e6", "#96305f", -0.0127, 0)}
    ${plate(1439.500, 264.300, 1735, 437)}${txt(1587, 284, "Controle de Consumo por Aula", 172, 11, { b: true })}${txt(1587.500, 306, "AFRFB + ICMS/SP", 89.500, 10.500, { i: true })}
    ${pie("p5", 1587.1, 365.2, 99.700, 51.200, 16.300, "#7ec5fa", "#344f63", "#78baea", "#fb4010", 0, 0.2607)}
  </svg>`;

const tabs: [string, number, number, string, string][] = [
  ["Macrocontrole de Revisões", 179, 148, "#ff0000", "#fff"], ["RAI", 45, 19, "#99ccff", "#111"], ["PA", 40, 15, "#ffffff", "#333"], ["Comparativos Gráficos", 153, 121, "#ff8080", "#222"],
  ["Curva de Esquecimento", 156, 130, "#ffff99", "#222"], ["Análise Temporal", 124, 94, "#ff9911", "#111"], ["Análise de Execução Tática", 177, 147, "#1a46ff", "#fff"], ["Diário de Positividade", 146, 119, "#22ff22", "#111"], ["Reta Final - AFRFB", 133, 100, "#f2f1f0", "#4c4c4c"],
];

@customElement("app-root")
export class AppRoot extends LitElement {
  static styles = css`
    :host { display: block; width: 1920px; height: 1080px; overflow: hidden; font-family: "Open Sans", "Noto Sans", sans-serif; background: #f2f1f0; }
    * { box-sizing: border-box; }
    svg { display: block; flex: none; }
    .fit { overflow: visible; }
    .page { display: flex; flex-direction: column; width: 1920px; height: 1080px; }
    .top { height: 27px; flex: none; display: flex; align-items: center; background: linear-gradient(#56534b, #403f3a); }
    .body { flex: 1; display: flex; min-height: 0; }
    .dock { width: 35px; flex: none; background: #3b3b36; display: flex; flex-direction: column; }
    .dk { height: 32px; flex: none; display: flex; align-items: center; }
    .dk .pips { width: 8px; display: flex; flex-direction: column; gap: 2px; align-items: flex-start; padding-left: 2px; }
    .dk .pips b { width: 2px; height: 2px; background: #e8562a; border-radius: 1px; }
    .dk .ib { width: 18px; height: 18px; }
    .dk.on { background: linear-gradient(#5e5d59, #5e5d59) 2px 1px / 30px 30px no-repeat; }
    .apps { margin-top: auto; padding: 0 0 10px 12px; }
    .win { flex: 1; display: flex; flex-direction: column; min-width: 0; }
    .title { height: 28px; flex: none; display: flex; align-items: center; background: linear-gradient(#3b3a36, #4f4c45); }
    .menu { height: 24px; flex: none; display: flex; align-items: stretch; background: #504c45; }
    .menu .it { padding-top: 2px; }
    .close { margin-left: auto; width: 36px; background: #f2f1f0; display: flex; align-items: center; justify-content: center; }
    .bar { display: flex; align-items: center; flex: none; background: #f2f1f0; }
    .it { flex: none; display: flex; align-items: center; justify-content: center; }
    .sep { height: 36px; background: #dad8d5; }
    .grip { height: 28px; background: repeating-linear-gradient(#b5b3b0 0 2px, transparent 2px 4px); }
    .b1 { height: 38px; } .b2 { height: 40px; } .b3 { height: 33px; }
    .combo { height: 27px; border: 1px solid #9a9895; border-radius: 4px; background: #fff; overflow: hidden; justify-content: flex-start; box-shadow: inset 0 1px 1px #d8d7d5; }
    .cv { height: 100%; display: flex; align-items: center; padding-left: 6px; border-right: 1px solid #c2c0bd; }
    .cb { flex: 1; height: 100%; display: flex; align-items: center; justify-content: center; background: linear-gradient(#fdfdfd, #e9e8e6); }
    .pressed { height: 33px; border: 1px solid #8f8d8a; border-radius: 5px; background: #e6e5e3; }
    .input { height: 24px; border: 1px solid #9a9895; border-radius: 4px; background: #fff; justify-content: flex-start; padding-left: 3px; box-shadow: inset 0 1px 1px #d8d7d5; }
    .drop { height: 24px; border: 1px solid #aaa8a5; border-radius: 4px; background: linear-gradient(#fff, #e9e8e6); }
    .work { flex: none; display: flex; height: 842px; }
    .sheetbox { width: 1870px; flex: none; display: flex; flex-direction: column; height: 842px; overflow: hidden; }
    .colh { display: flex; height: 21px; flex: none; border-top: 1px solid #b0aeab; border-bottom: 1px solid #908e88; background: linear-gradient(#f9f9f8 45%, #efeeec 46%); overflow: hidden; }
    .colh div { flex: none; border-right: 1px solid #a09e9a; display: flex; align-items: center; justify-content: center; padding-top: 1px; }
    .colh .sel { background: linear-gradient(#f6a688 45%, #f07746 46%); }
    .area { display: flex; height: 821px; }
    .rowh { width: 41px; flex: none; display: grid; border-right: 1px solid #908e88; background: linear-gradient(90deg, #f9f9f8 45%, #efeeec 55%); height: 820px; overflow: hidden; }
    .rowh div { border-bottom: 1px solid #9a9893; display: flex; align-items: center; justify-content: center; min-height: 0; }
    .rowh svg { margin: -10px 0; }
    .rowh .sel { background: linear-gradient(90deg, #f6a688 45%, #f07746 55%); }
    .grid { position: relative; width: 1829px; height: 820px; overflow: hidden; background: #fff; isolation: isolate; display: grid; }
    .lines { grid-area: 1/1/-1/-1; }
    .cell { position: relative; display: flex; align-items: center; justify-content: center; font: 9px/10px "Liberation Sans", Arial, sans-serif; color: #141414; white-space: nowrap; min-width: 0; min-height: 0; z-index: 0; }
    .cell span { letter-spacing: 0.1px; }
    .bb { border-bottom: 1px solid #000; } .br { border-right: 1px solid #000 !important; } .bt { box-shadow: 0 -1px #000; } .bl { box-shadow: -1px 0 #000; }
    .gr { border-right: 1px solid #c0c0c0; } .gb { border-bottom: 1px solid #c0c0c0; }
    .dn span { padding-top: 2px; }
    .bot { align-items: flex-end; } .nb { border-bottom-color: #e0e0c0; }
    .h1 { font-weight: 700; font-size: 12px; line-height: 14px; color: #fff; } .h1 span { letter-spacing: 0; }
    .h2 { font-weight: 700; font-size: 12px; line-height: 13px; } .h2 span { letter-spacing: 0; padding: 0; }
    .f8 { font-size: 8px; } .f85 { font-size: 8.500px; } .f93 { font-size: 9.200px; } .f95 { font-size: 9.500px; } .f13 { font-size: 12.500px; line-height: 14px; } .f13 span { letter-spacing: 0; }
    .huge { font-size: 71.500px; line-height: 71px; font-weight: 700; } .big { font-size: 48px; line-height: 50px; font-weight: 700; color: #000; }
    .huge span, .big span { letter-spacing: 0; }
    .c1 { color: #00b0ff; } .c2 { color: #ff0000; }
    .teal { background: #33a3a3; } .cyanh { background: #00cccc; color: #e2ffff; } .cream { background: #ffffcc; } .white { background: #fff; } .grey { background: #e6e6e6; }
    .wide { font-size: 9.300px; }
    .redl { background: #ff3333; color: #2a0000; } .blueh { background: #0099ff; color: #e2f3ff; } .gold { background: #ffd320; color: #2c2400; } .lemon { background: #ffff99; }
    .black { background: #000; color: #f0f0f0; } .pink { background: #ff9999; } .mint { background: #33ff99; } .yellow { background: #ffff00; } .green { background: #33cc66; color: #d6ffe2; }
    .peach { background: #ffcc99; } .red { background: #ff0000; color: #2a0000; } .wt { color: #fff; } .aqua { background: #00dcff; color: #001a1f; } .purple { background: #9966cc; color: #f3eaff; }
    .sky { background: #99ccff; } .navy { background: #2323dc; } .pale { background: #cfe7f5; }
    .sq { font-style: normal; text-decoration: underline dotted #f00 1.500px; text-underline-offset: 1px; text-decoration-skip-ink: none; }
    .dot { position: absolute; right: 3px; top: 1px; width: 5px; height: 5px; background: #f00; }
    .plate1 { position: absolute; left: 717px; top: 0; width: 611px; height: 235px; background: linear-gradient(#c0c0c0, #fff); mix-blend-mode: darken; }
    .charts { position: absolute; left: 0; top: 0; }
    .cursor { position: absolute; left: 185px; top: 245px; width: 80px; height: 11px; border: 2px solid #000; border-bottom-width: 1px; border-right-width: 1px; }
    .handle { position: absolute; left: 261px; top: 253px; width: 5px; height: 5px; background: #000; }
    .vs { width: 8px; flex: none; display: flex; flex-direction: column; background: #f7f6f5; border-top: 1px solid #b0aeab; }
    .vs .k { height: 7px; background: #b9b7b3; border-bottom: 2px solid #f2f1f0; display: flex; align-items: center; } .vs .k b { width: 6px; height: 2px; background: #111; }
    .vs .th { height: 410px; background: #f28e6a; }
    .side { width: 7px; flex: none; border-left: 1px solid #b5b3b0; background: #f2f1f0; padding-top: 382px; }
    .side div { height: 72px; background: #99968f; display: flex; align-items: center; justify-content: center; }
    .hs { height: 8px; flex: none; display: flex; background: #f7f6f5; } .hs div { width: 909px; margin-left: 1px; background: #f28e6a; }
    .tabs { height: 20px; flex: none; display: flex; border-bottom: 1px solid #b0aeab; }
    .nav { width: 118px; flex: none; display: flex; align-items: center; padding-left: 13px; gap: 0; }
    .tab { height: 18px; flex: none; display: flex; align-items: center; justify-content: center; border: 1px solid #a9a7a3; border-left-width: 0; padding-bottom: 2px; }
    .tab.act { border-bottom: 4px solid #22ff22; height: 19px; border-top: 0; padding: 0; }
    .tab.act .fit { margin-top: 1px; }
    .status { flex: 1; display: flex; align-items: center; }
    .ss { height: 16px; background: #a19f9b; }
  `;

  private dockItem([icon, pips, on]: [unknown, number, boolean?]) {
    return html`<div class="dk ${on ? "on" : ""}"><div class="pips">${range(pips).map(() => html`<b></b>`)}</div><div class="ib">${icon}</div></div>`;
  }

  render() {
    const menus: [string, number, number][] = [["Arquivo", 42, 52], ["Editar", 106.5, 40], ["Exibir", 159.5, 38], ["Inserir", 210, 42.5], ["Formatar", 265.5, 63], ["Estilos", 341.5, 44], ["Planilha", 398, 52.5], ["Dados", 464, 42], ["Ferramentas", 518.5, 85], ["Janela", 616, 42.5], ["Ajuda", 671, 38.5]];
    const wb = (fill: string, mark: unknown) => html`<svg width="17" height="17"><circle cx="8.500" cy="8.500" r="7.800" fill=${fill} stroke="#33322e"/>${mark}</svg>`;
    return html`<div class="page">
      <div class="top">${row([
        { x: 12, w: 76, t: fit("Atividades", 76, 14.5, "#dfdbd2", 600) },
        { x: 109, w: 14, t: html`<svg width="14" height="17" viewBox="0 0 18 18"><path d="M2 .5H12L16.500 5V17.500H2Z" fill="#f3f8f1"/><path d="M11 .5H16.500V6Z" fill="#1d8f1d"/><rect x="4.500" y="7" width="9" height="8" fill="#198a19"/><path d="M5.500 9.500H12.500M5.500 12H12.500M9 7V15" stroke="#e5f6e5"/></svg>` },
        { x: 130, w: 115, t: fit("LibreOffice Calc", 115, 14.5, "#dfdbd2", 600) },
        { x: 250, w: 10, t: html`<svg width="10" height="6"><path d="M0 0H10L5 6Z" fill="#b8b4ab"/></svg>` },
        { x: 943.5, w: 68, t: fit("sex, 15:32", 68, 14.5, "#dfdbd2", 600) },
        { x: 1813, w: 16, t: html`<svg width="16" height="15" viewBox="0 0 16 15" fill="none"><path d="M1 5Q8 -1 15 5M3.500 8Q8 4 12.500 8" stroke="#8b8880" stroke-width="1.800"/><path d="M5.500 10.500Q8 8.500 10.500 10.500" stroke="#dfdbd2" stroke-width="1.800"/><circle cx="8" cy="13" r="1.800" fill="#dfdbd2"/></svg>` },
        { x: 1841, w: 16, t: html`<svg width="16" height="15" viewBox="0 0 16 15" fill="none"><path d="M0 5H3L7 1V14L3 10H0Z" fill="#dfdbd2"/><path d="M9 5Q10.500 7.500 9 10M11 3Q14 7.500 11 12M13 1Q17 7.500 13 14" stroke="#dfdbd2" stroke-width="1.300"/></svg>` },
        { x: 1871, w: 12, t: html`<svg width="12" height="16" viewBox="0 0 12 16" fill="none"><path d="M1 3H4V1H8V3H11V15H1Z" stroke="#a5a29a" stroke-width="1.500"/><path d="M8 4L3.500 9H6L4 13L9 8H6.500Z" fill="#dfdbd2"/></svg>` },
        { x: 1895, w: 10, t: html`<svg width="10" height="6"><path d="M0 0H10L5 6Z" fill="#dfdbd2"/></svg>` },
      ], 0)}</div>
      <div class="body">
        <div class="dock">${dock.map((d) => this.dockItem(d))}
          <div class="apps"><svg width="10" height="10">${range(9).map((i) => svg`<rect x=${(i % 3) * 4} y=${Math.floor(i / 3) * 4} width="2" height="2" fill="#d8d6d0"/>`)}</svg></div>
        </div>
        <div class="win">
          <div class="title">${row([
            { x: 822, w: 310, t: fit("Controle de Revisões.ods - LibreOffice Calc", 310, 14.5, "#dfdbd2", 600) },
            { x: 1858.5, w: 17, t: wb("#7d7a73", svg`<path d="M5 9H12" stroke="#33322e"/>`) },
            { x: 1878.5, w: 17, t: wb("#7d7a73", svg`<rect x="5" y="5.500" width="7" height="6" fill="none" stroke="#33322e"/>`) },
            { x: 1898.5, w: 17, t: wb("#ee6336", svg`<path d="M6 6L11 11M11 6L6 11" stroke="#33322e" stroke-width="1.300"/>`) },
          ], 35)}</div>
          <div class="menu">${row(menus.map(([t, x, w]) => ({ x, w, t: fit(t, w, 14.5, "#dfdbd2") })), 35)}<div class="close"><svg width="7" height="7"><path d="M.5 .5L6.500 6.500M6.500 .5L.5 6.500" stroke="#444" stroke-width="1.300"/></svg></div></div>
          <div class="bar b1">${row(bar1, 35)}</div>
          <div class="bar b2">${row(bar2, 35)}</div>
          <div class="bar b3">${row(bar3, 35)}</div>
          <div class="work">
            <div class="sheetbox">
              <div class="colh"><div style="width:41px"></div>${COLS.map((c, i) => {
                const w = c.length === 1 ? (c === "I" ? 3.5 : c === "J" ? 6 : c === "M" || c === "W" ? 13 : 9) : c.includes("I") || c.includes("J") ? 14 : c === "AM" ? 23 : 19;
                return html`<div class=${c === "C" ? "sel" : ""} style="width:${COL_W[i]}px">${fit(c, w, 14, c === "C" ? "#fff" : "#4c4c4c", c === "C" ? 700 : 400)}</div>`;
              })}</div>
              <div class="area">
                <div class="rowh" style="grid-template-rows:${rowTpl}">${ROW_H.map((_, i) => {
                  const n = String(i + 1), on = i === 19;
                  return html`<div class=${on ? "sel" : ""}>${fit(n, n.length * 7.8, 15, on ? "#fff" : "#4c4c4c", on ? 700 : 400)}</div>`;
                })}</div>
                <div class="grid" style="grid-template-columns:${colTpl};grid-template-rows:${rowTpl}">
                  <svg class="lines" width="1829" height="820"><path d=${gridPath} stroke="#c0c0c0"/></svg>
                  ${cellsLeft()}${cellsMid()}${cellsRight()}
                  ${charts()}
                  <div class="cursor"></div><div class="handle"></div>
                </div>
              </div>
            </div>
            <div class="vs"><div class="k"><b></b></div><div class="th"></div></div>
            <div class="side"><div><svg width="5" height="8"><path d="M5 0V8L0 4Z" fill="#f2f1f0"/></svg></div></div>
          </div>
          <div class="hs"><div></div></div>
          <div class="tabs">
            <div class="nav"><svg width="100" height="18" viewBox="0 0 100 18"><path d="M1 4V14M7 4V14L2 9ZM26 4V14L20 9ZM39 4V14L45 9ZM58 4V14L63 9ZM64.500 4V14" fill="#b5b3af" stroke="#a3a19d"/><path d="M83 9.500H95M89 3.500V15.500" stroke="#3d3d3d" stroke-width="3.600"/></svg></div>
            ${tabs.map(([t, w, tw, bg, fg]) => html`<div class="tab ${t === "PA" ? "act" : ""}" style="width:${w}px;background-color:${bg}">${fit(t, tw, 12.5, fg, t === "PA" ? 600 : 400)}</div>`)}
          </div>
          <div class="status">${row([
            { x: 45, w: 79, t: fit("Planilha 3 de 9", 79, 12.5) }, { x: 347, w: 1, c: "ss" }, { x: 636, w: 1, c: "ss" }, { x: 645, w: 38, t: fit("Padrão", 38, 12.5) },
            { x: 1022, w: 98, t: fit("Português (Brasil)", 98, 12.5) }, { x: 1308, w: 1, c: "ss" },
            { x: 1311, w: 12, t: html`<svg width="12" height="12"><path d="M1 2H8V10H1Z" fill="#aaa" stroke="#888"/><path d="M10.500 1V11" stroke="#555" stroke-width="1.500"/></svg>` }, { x: 1331, w: 1, c: "ss" },
            { x: 1341, w: 13, t: html`<svg width="13" height="14"><path d="M1 1H9L12 4V13H1Z" fill="#fff" stroke="#888"/><path d="M4 8L6 10L10 5" fill="none" stroke="#777"/></svg>` }, { x: 1362, w: 1, c: "ss" },
            { x: 1506, w: 108, t: fit("Média: 15; Soma: 15", 108, 12.5) }, { x: 1733, w: 1, c: "ss" },
            { x: 1738, w: 126, t: html`<svg width="126" height="14"><path d="M1 7H9M117 7H125M121 3V11" stroke="#777" stroke-width="1.500"/><path d="M18 7H112M63 3V11" stroke="#aaa"/><circle cx="30" cy="7" r="4" fill="#fff" stroke="#777"/></svg>` },
            { x: 1871, w: 1, c: "ss" }, { x: 1883, w: 25, t: fit("45%", 25, 12.5) },
          ], 35)}</div>
        </div>
      </div>
    </div>`;
  }
}
